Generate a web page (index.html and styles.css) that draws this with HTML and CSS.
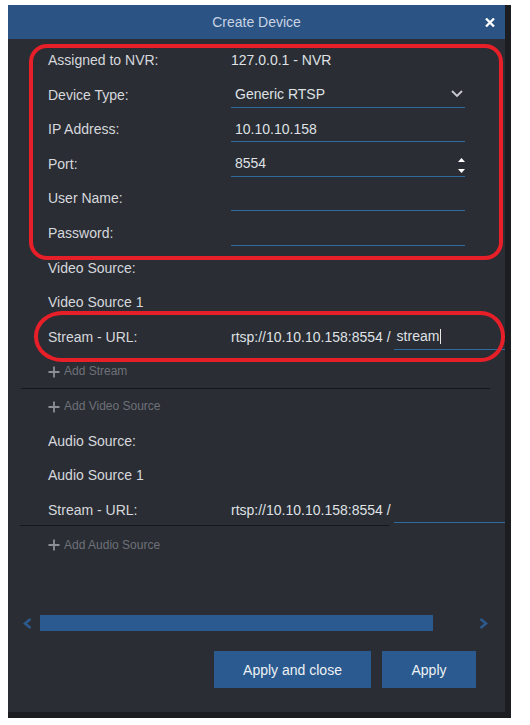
FILE: index.html
```html
<!DOCTYPE html>
<html>
<head>
<meta charset="utf-8">
<title>Create Device</title>
<link rel="stylesheet" href="styles.css">
</head>
<body>
<div class="backdrop">
  <div class="dialog">
    <div class="header">
      <div class="title">Create Device</div>
      <svg class="close" width="10" height="9" viewBox="0 0 10 9"><path d="M1 0.5 L9 8.5 M9 0.5 L1 8.5" stroke="#ffffff" stroke-width="2.3" fill="none"/></svg>
    </div>
    <div class="content">
      <div class="row"><div class="label">Assigned to NVR:</div><div class="value">127.0.0.1 - NVR</div></div>
      <div class="row"><div class="label">Device Type:</div>
        <div class="field"><span class="grow">Generic RTSP</span>
          <svg class="chev" width="12" height="25" viewBox="0 0 12 25"><polyline points="1,9 6,14 11,9" stroke="#c9cbd0" stroke-width="1.8" fill="none"/></svg>
        </div>
      </div>
      <div class="row"><div class="label">IP Address:</div><div class="field"><span class="grow">10.10.10.158</span></div></div>
      <div class="row"><div class="label">Port:</div>
        <div class="field"><span class="grow">8554</span>
          <svg class="spin" width="7" height="25" viewBox="0 0 7 25"><polygon points="0,11 3.5,7 7,11" fill="#ffffff"/><polygon points="0,18 7,18 3.5,22" fill="#ffffff"/></svg>
        </div>
      </div>
      <div class="row"><div class="label">User Name:</div><div class="field"></div></div>
      <div class="row"><div class="label">Password:</div><div class="field"></div></div>
      <div class="row"><div class="label">Video Source:</div></div>
      <div class="row"><div class="label">Video Source 1</div></div>
      <div class="row url-row">
        <div class="lead"><div class="label">Stream - URL:</div><div class="prefix">rtsp://10.10.10.158:8554 /</div></div>
        <div class="field stream"><span>stream</span><span class="caret"></span></div>
      </div>
      <div class="row add-row sep">
        <svg class="plus" width="12" height="12" viewBox="0 0 12 12"><path d="M6 0.5 V11.5 M0.5 6 H11.5" stroke="#8c8f95" stroke-width="1.8" fill="none"/></svg>
        <span>Add Stream</span>
      </div>
      <div class="row add-row">
        <svg class="plus" width="12" height="12" viewBox="0 0 12 12"><path d="M6 0.5 V11.5 M0.5 6 H11.5" stroke="#8c8f95" stroke-width="1.8" fill="none"/></svg>
        <span>Add Video Source</span>
      </div>
      <div class="row"><div class="label">Audio Source:</div></div>
      <div class="row"><div class="label">Audio Source 1</div></div>
      <div class="row url-row">
        <div class="lead lined"><div class="label">Stream - URL:</div><div class="prefix">rtsp://10.10.10.158:8554 /</div></div>
        <div class="field stream"></div>
      </div>
      <div class="row add-row">
        <svg class="plus" width="12" height="12" viewBox="0 0 12 12"><path d="M6 0.5 V11.5 M0.5 6 H11.5" stroke="#8c8f95" stroke-width="1.8" fill="none"/></svg>
        <span>Add Audio Source</span>
      </div>
    </div>
    <div class="hscroll">
      <svg width="9" height="11" viewBox="0 0 9 11"><polyline points="7.5,1 2,5.5 7.5,10" stroke="#2c5a8c" stroke-width="2.6" fill="none"/></svg>
      <div class="thumb"></div>
      <svg class="next" width="9" height="11" viewBox="0 0 9 11"><polyline points="1.5,1 7,5.5 1.5,10" stroke="#2c5a8c" stroke-width="2.6" fill="none"/></svg>
    </div>
    <div class="footer">
      <button class="btn wide">Apply and close</button>
      <button class="btn">Apply</button>
    </div>
    <div class="mark mark-a"></div>
    <div class="mark mark-b"></div>
  </div>
</div>
</body>
</html>
```

FILE: styles.css
```css
html, body {
  margin: 0;
  padding: 0;
  background: #ffffff;
}

body {
  font-family: "Liberation Sans", Arial, sans-serif;
  font-size: 14px;
}

.backdrop {
  width: 503px;
  height: 713px;
  margin: 5px 0 0 8px;
  background: #1b1d21;
}

.dialog {
  position: relative;
  width: 497px;
  height: 707px;
  background: #2a2d34;
  overflow: hidden;
  display: flex;
  flex-direction: column;
}

.header {
  flex: none;
  height: 34px;
  background: #2b5384;
  display: grid;
  grid-template-columns: 1fr auto 1fr;
  align-items: center;
}

.title {
  grid-column: 2;
  color: #c9d4e3;
  font-size: 14px;
}

.close {
  grid-column: 3;
  justify-self: end;
  margin-right: 10px;
}

.content {
  flex: 1;
  padding-top: 3.68px;
  overflow: hidden;
  color: #d6d8dc;
}

.row {
  display: flex;
  align-items: center;
  height: 34.64px;
  padding-left: 40px;
  box-sizing: border-box;
  white-space: nowrap;
}

.label {
  flex: none;
  width: 183px;
}

.value {
  color: #dfe1e4;
}

.field {
  flex: none;
  width: 234px;
  height: 26px;
  box-sizing: border-box;
  border-bottom: 1px solid #2e6c9d;
  padding-left: 4px;
  display: flex;
  align-items: center;
  color: #dfe1e4;
}

.grow {
  flex: 1;
}

.chev {
  margin-right: 2px;
}

.url-row {
  padding-left: 12px;
}

.lead {
  flex: none;
  display: flex;
  align-items: center;
  width: 369px;
  height: 33px;
  padding: 2px 0 0 28px;
  box-sizing: border-box;
  align-self: flex-start;
  border-bottom: 1px solid transparent;
}

.lead.lined {
  border-bottom-color: #15171b;
}

.prefix {
  flex: none;
  color: #dfe1e4;
}

.field.stream {
  width: 130px;
  margin-left: 4.6px;
  padding-left: 3px;
}

.caret {
  display: inline-block;
  width: 1px;
  height: 15px;
  margin-left: 1px;
  background: #e8e8e8;
}

.add-row {
  font-size: 12px;
  color: #6e7178;
}

.add-row .plus {
  margin-right: 4px;
  margin-top: 1px;
}

.add-row.sep {
  margin: 0 15px 0 13px;
  padding-left: 27px;
  border-bottom: 1px solid #14161a;
}

.hscroll {
  flex: none;
  height: 16px;
  display: flex;
  align-items: center;
  padding-left: 15px;
}

.thumb {
  width: 393px;
  height: 16px;
  margin-left: 8px;
  background: #2a5a8f;
}

.next {
  margin-left: 46px;
}

.footer {
  flex: none;
  display: flex;
  justify-content: flex-end;
  gap: 11px;
  padding: 20px 29px 24px 0;
}

.btn {
  width: 94px;
  height: 37px;
  border: none;
  padding: 0;
  background: #2a5a8f;
  color: #eef1f5;
  font-family: "Liberation Sans", Arial, sans-serif;
  font-size: 14px;
}

.btn.wide {
  width: 157px;
}

.mark {
  position: absolute;
  box-sizing: border-box;
  border: 4.5px solid #e61f29;
}

.mark-a {
  left: 21px;
  top: 39px;
  width: 474px;
  height: 216px;
  border-radius: 18px;
}

.mark-b {
  left: 26px;
  top: 306px;
  width: 471px;
  height: 51px;
  border-radius: 28px 24px 24px 28px / 25px;
}
```
